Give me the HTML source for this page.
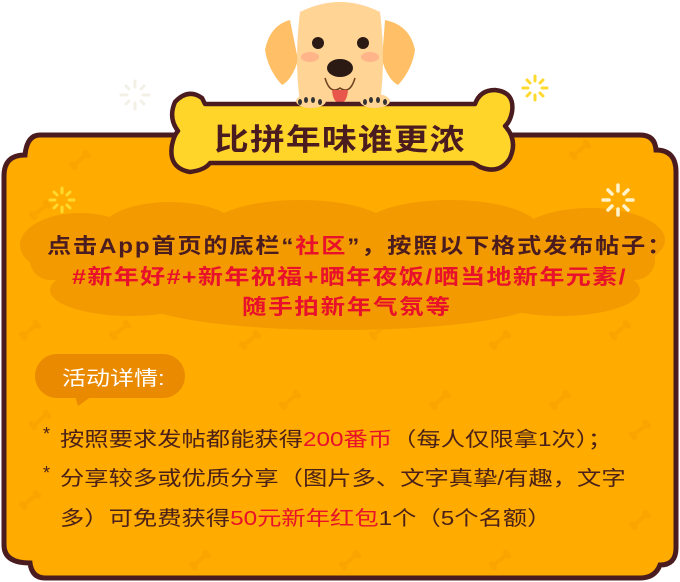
<!DOCTYPE html>
<html><head><meta charset="utf-8">
<style>
*{margin:0;padding:0}
body{width:680px;height:582px;background:#fff;position:relative;overflow:hidden;font-family:"Liberation Sans","Noto Sans CJK SC",sans-serif}
svg{position:absolute;left:0;top:0}
.t{position:absolute;white-space:nowrap;transform-origin:0 50%}
.h{font-weight:bold;color:#4a1c20;font-size:21px;letter-spacing:1.6px}
.r{color:#e8102a}
.l{font-size:20px;color:#4a2018;left:60px;transform:scaleX(1.215)}
.s{position:absolute;left:43px;font-size:18px;color:#4a2018}
</style></head><body>
<svg width="680" height="582" viewBox="0 0 680 582">
<defs>
<g id="bn"><path d="M-8,0 L8,0" stroke="#f7a000" stroke-width="4" stroke-linecap="round"/><circle cx="-9" cy="-2" r="3" fill="#f7a000"/><circle cx="-9" cy="2" r="3" fill="#f7a000"/><circle cx="9" cy="-2" r="3" fill="#f7a000"/><circle cx="9" cy="2" r="3" fill="#f7a000"/></g>
</defs>
<path d="M40,135 L640,135 Q655,135 656,150 Q676,150 676,172 L676,548 Q676,565 660,565 Q655,578 640,578 L45,578 Q32,578 30,563 Q4,563 4,545 L4,176 Q4,155 25,155 Q27,135 40,135 Z" fill="#ffab00" stroke="#4a1c20" stroke-width="5"/>
<g opacity="0.6">
<use href="#bn" transform="translate(80,160) rotate(-40)"/><use href="#bn" transform="translate(180,150) rotate(-40)"/><use href="#bn" transform="translate(580,150) rotate(-40)"/>
<use href="#bn" transform="translate(40,210) rotate(-40)"/><use href="#bn" transform="translate(640,250) rotate(-40)"/><use href="#bn" transform="translate(30,330) rotate(-40)"/>
<use href="#bn" transform="translate(120,330) rotate(-40)"/><use href="#bn" transform="translate(250,340) rotate(-40)"/><use href="#bn" transform="translate(380,330) rotate(-40)"/>
<use href="#bn" transform="translate(500,340) rotate(-40)"/><use href="#bn" transform="translate(620,330) rotate(-40)"/><use href="#bn" transform="translate(560,400) rotate(-40)"/>
<use href="#bn" transform="translate(640,430) rotate(-40)"/><use href="#bn" transform="translate(30,500) rotate(-40)"/><use href="#bn" transform="translate(640,520) rotate(-40)"/>
<use href="#bn" transform="translate(200,560) rotate(-40)"/><use href="#bn" transform="translate(350,560) rotate(-40)"/><use href="#bn" transform="translate(500,560) rotate(-40)"/>
<use href="#bn" transform="translate(40,420) rotate(-40)"/><use href="#bn" transform="translate(440,400) rotate(-40)"/><use href="#bn" transform="translate(290,400) rotate(-40)"/>
</g>
<g fill="#f29a00">
<ellipse cx="80" cy="245" rx="60" ry="32"/><ellipse cx="170" cy="232" rx="70" ry="30"/><ellipse cx="300" cy="228" rx="90" ry="28"/><ellipse cx="450" cy="230" rx="90" ry="30"/><ellipse cx="590" cy="240" rx="75" ry="32"/>
<rect x="30" y="232" width="625" height="48" rx="20"/><ellipse cx="130" cy="290" rx="80" ry="26"/><ellipse cx="340" cy="300" rx="200" ry="30"/><ellipse cx="560" cy="290" rx="80" ry="26"/>
</g>
<g stroke-linecap="round" stroke-width="3">
<g stroke="#ffd92e" transform="translate(62,200)"><path d="M0,-12V-7M0,7V12M-12,0H-7M7,0H12M-8,-8L-5,-5M5,5L8,8M-8,8L-5,5M5,-5L8,-8"/></g>
<g stroke="#fff3cc" transform="translate(618,200)" stroke-width="3.5"><path d="M0,-15V-9M0,9V15M-15,0H-9M9,0H15M-10,-10L-6,-6M6,6L10,10M-10,10L-6,6M6,-6L10,-10"/></g>
<g stroke="#ffd92e" transform="translate(535,88)"><path d="M0,-12V-7M0,7V12M-12,0H-7M7,0H12M-8,-8L-5,-5M5,5L8,8M-8,8L-5,5M5,-5L8,-8"/></g>
<g stroke="#f3f0e6" transform="translate(135,95)"><path d="M0,-14V-8M0,8V14M-14,0H-8M8,0H14M-9,-9L-6,-6M6,6L9,9M-9,9L-6,6M6,-6L9,-9"/></g>
</g>
<path d="M290,20 Q270,25 265,50 Q268,70 282,85 Q292,80 298,60 Z" fill="#ffbf66"/>
<path d="M385,20 Q410,25 415,50 Q412,70 398,85 Q388,80 382,60 Z" fill="#ffbf66"/>
<path d="M300,12 Q340,-8 380,12 Q386,60 380,102 L300,102 Q294,60 300,12 Z" fill="#ffd494"/>
<circle cx="318" cy="43" r="6" fill="#2b1a14"/><circle cx="363" cy="43" r="6" fill="#2b1a14"/>
<ellipse cx="310" cy="57" rx="9" ry="5" fill="#ffb48a"/><ellipse cx="370" cy="57" rx="9" ry="5" fill="#ffb48a"/>
<path d="M325,78 Q330,95 340,88 Q350,95 355,78" fill="none" stroke="#6a4020" stroke-width="1.5"/>
<path d="M332,90 Q333,103 340,103 Q347,103 348,90 Z" fill="#e8554b"/>
<ellipse cx="340" cy="68" rx="13" ry="9" fill="#2b1a14"/>
<path d="M205,104 L475,104 Q480,90 495,90 Q515,92 512,112 Q510,122 505,126 Q518,140 510,158 Q500,175 480,167 Q474,163 472,163 L210,163 Q205,170 190,172 Q168,168 172,145 Q174,135 178,131 Q168,118 175,102 Q188,88 202,98 Z" fill="#ffd52a" stroke="#4a1c20" stroke-width="4.5" stroke-linejoin="round"/>
<g fill="#ffd494"><ellipse cx="311" cy="101" rx="15" ry="7"/><ellipse cx="375" cy="101" rx="15" ry="7"/></g>
<g fill="#333"><ellipse cx="300" cy="102" rx="2" ry="3"/><ellipse cx="306" cy="100" rx="2" ry="3"/><ellipse cx="313" cy="100" rx="2" ry="3"/><ellipse cx="320" cy="102" rx="2" ry="3"/><ellipse cx="365" cy="102" rx="2" ry="3"/><ellipse cx="371" cy="100" rx="2" ry="3"/><ellipse cx="378" cy="100" rx="2" ry="3"/><ellipse cx="385" cy="102" rx="2" ry="3"/></g>
<rect x="35" y="354" width="150" height="44" rx="22" fill="#e98a00"/>
<path d="M75,396 L78,406 L92,396 Z" fill="#e98a00"/>
</svg>
<div class="t" style="left:214px;top:115px;font-size:30px;font-weight:bold;color:#4a1c20;letter-spacing:1px;transform:scaleX(1.16)">比拼年味谁更浓</div>
<div class="t h" style="left:47px;top:230px;transform:scaleX(1.15)">点击App首页的底栏“<span class="r">社区</span>”，按照以下格式发布帖子：</div>
<div class="t h r" style="left:72px;top:261px;letter-spacing:1.2px;transform:scaleX(1.19)">#新年好#+新年祝福+晒年夜饭/晒当地新年元素/</div>
<div class="t h r" style="left:242px;top:291px;transform:scaleX(1.16)">随手拍新年气氛等</div>
<div class="t" style="left:62px;top:362px;font-size:20px;color:#fff;transform:scaleX(1.2)">活动详情:</div>
<div class="s" style="top:424px">*</div>
<div class="t l" style="top:423px">按照要求发帖都能获得<span class="r">200番币</span>（每人仅限拿1次）；</div>
<div class="s" style="top:463px">*</div>
<div class="t l" style="top:462px">分享较多或优质分享（图片多、文字真挚/有趣，文字</div>
<div class="t l" style="top:502px">多）可免费获得<span class="r">50元新年红包</span>1个（5个名额）</div>
</body></html>
